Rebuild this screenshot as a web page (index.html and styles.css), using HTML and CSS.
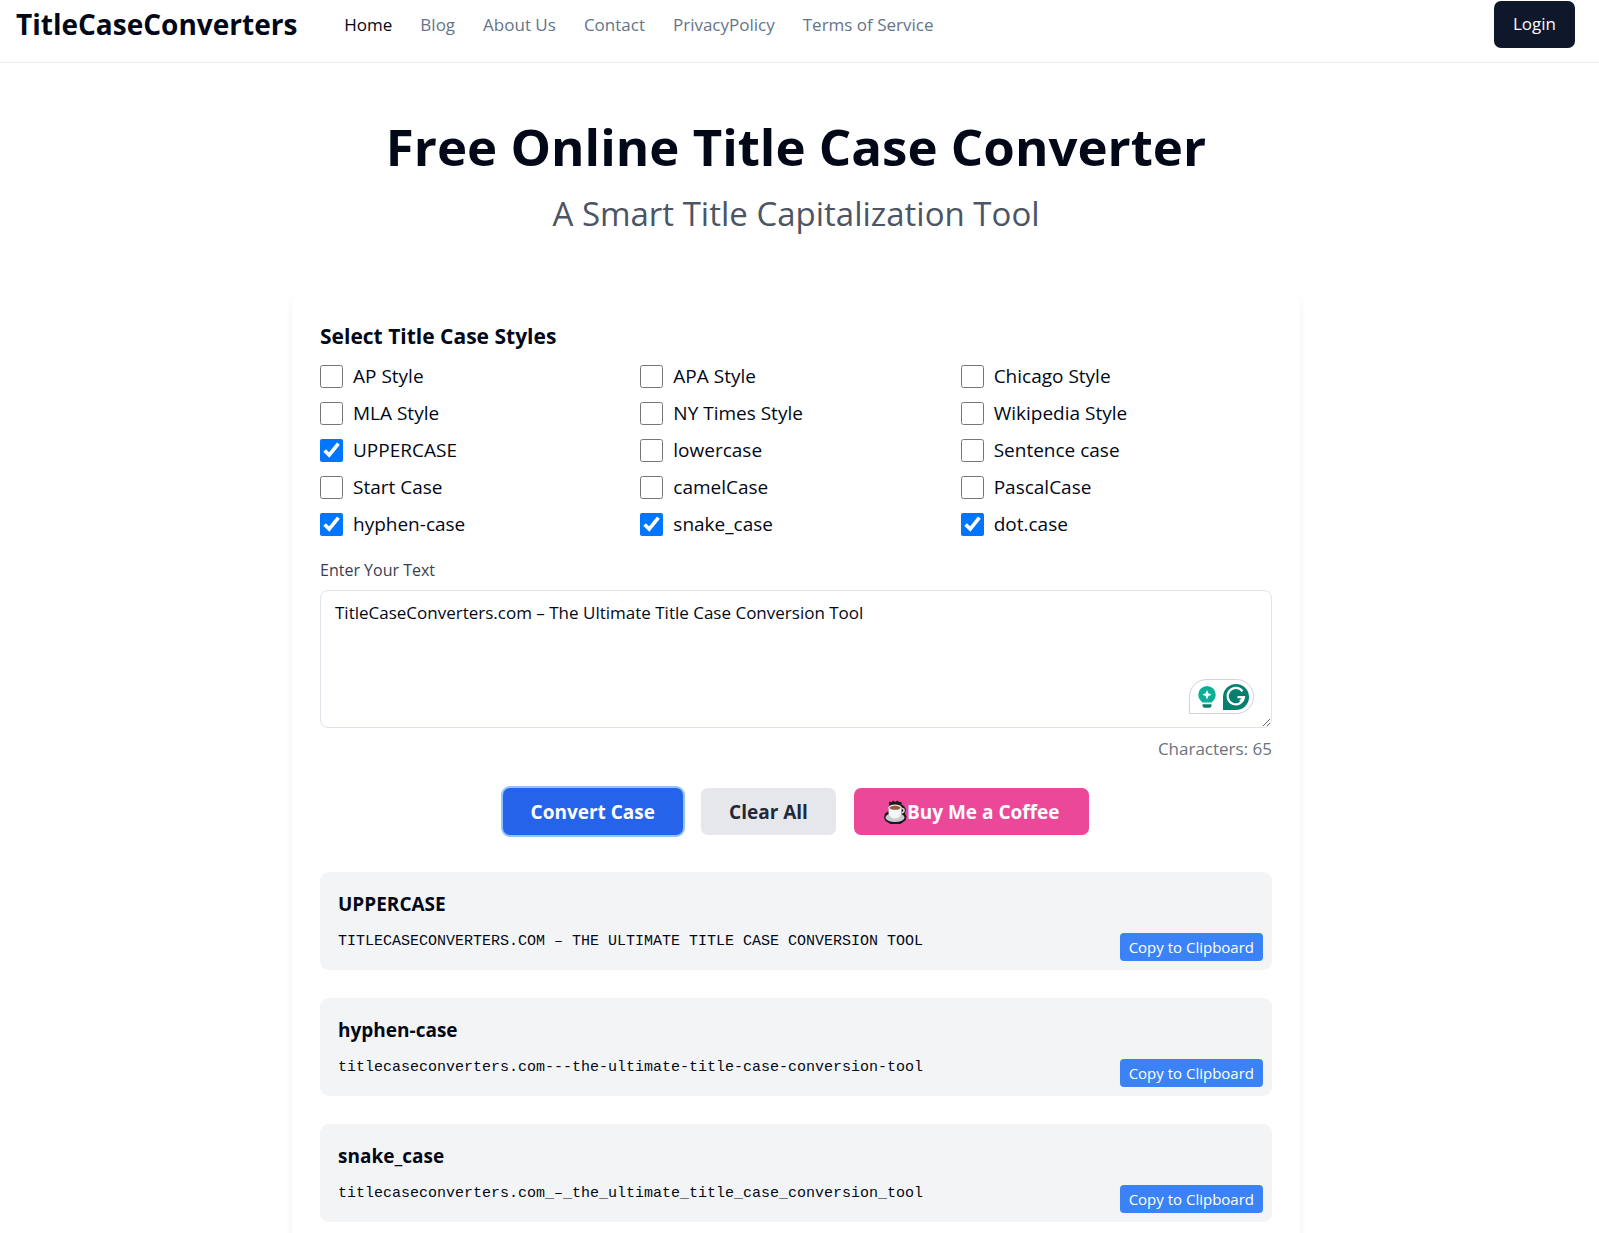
FILE: index.html
```html
<!DOCTYPE html>
<html lang="en">
<head>
<meta charset="utf-8">
<meta name="viewport" content="width=device-width, initial-scale=1">
<title>Free Online Title Case Converter</title>
<link rel="stylesheet" href="styles.css">
</head>
<body>
<header class="site-header">
  <a class="logo" href="#">TitleCaseConverters</a>
  <nav class="nav">
    <a class="nav-link nav-link-active" href="#">Home</a>
    <a class="nav-link" href="#">Blog</a>
    <a class="nav-link" href="#">About Us</a>
    <a class="nav-link" href="#">Contact</a>
    <a class="nav-link" href="#">PrivacyPolicy</a>
    <a class="nav-link" href="#">Terms of Service</a>
  </nav>
  <button class="login" type="button">Login</button>
</header>
<main class="page">
  <div class="hero">
    <h1 class="hero-title">Free Online Title Case Converter</h1>
    <p class="hero-subtitle">A Smart Title Capitalization Tool</p>
  </div>
  <form class="card">
    <fieldset class="styles">
      <legend class="styles-title">Select Title Case Styles</legend>
      <div class="styles-grid">
        <label class="option"><input class="check" type="checkbox">AP Style</label>
        <label class="option"><input class="check" type="checkbox">APA Style</label>
        <label class="option"><input class="check" type="checkbox">Chicago Style</label>
        <label class="option"><input class="check" type="checkbox">MLA Style</label>
        <label class="option"><input class="check" type="checkbox">NY Times Style</label>
        <label class="option"><input class="check" type="checkbox">Wikipedia Style</label>
        <label class="option"><input class="check" type="checkbox" checked>UPPERCASE</label>
        <label class="option"><input class="check" type="checkbox">lowercase</label>
        <label class="option"><input class="check" type="checkbox">Sentence case</label>
        <label class="option"><input class="check" type="checkbox">Start Case</label>
        <label class="option"><input class="check" type="checkbox">camelCase</label>
        <label class="option"><input class="check" type="checkbox">PascalCase</label>
        <label class="option"><input class="check" type="checkbox" checked>hyphen-case</label>
        <label class="option"><input class="check" type="checkbox" checked>snake_case</label>
        <label class="option"><input class="check" type="checkbox" checked>dot.case</label>
      </div>
    </fieldset>
    <label class="text-label" for="source">Enter Your Text</label>
    <div class="text-wrap">
      <textarea class="text-area" id="source">TitleCaseConverters.com – The Ultimate Title Case Conversion Tool</textarea>
      <div class="assistant">
        <svg width="18" height="22" viewBox="0 0 18 22" aria-hidden="true">
          <path fill="#0bae96" d="M9 0a8.700 8.700 0 0 0-8.700 8.700c0 3.300 1.800 5.500 4 7.800h9.400c2.200-2.300 4-4.500 4-7.800A8.700 8.700 0 0 0 9 0z"/>
          <path fill="#fff" d="M9 4l1.400 3.300 3.300 1.400-3.300 1.400L9 13.400l-1.400-3.300-3.300-1.400 3.300-1.400z"/>
          <path fill="#087d6e" d="M4.500 18.300h9v1.100a2.300 2.300 0 0 1-2.300 2.300H6.800a2.300 2.300 0 0 1-2.300-2.300z"/>
        </svg>
        <svg width="26" height="26" viewBox="0 0 26 26" aria-hidden="true">
          <path fill="#067f6f" d="M13 0a13 13 0 1 1 0 26H0V13A13 13 0 0 1 13 0z"/>
          <path fill="none" stroke="#fff" stroke-width="2.200" d="M19.500 7.300A8.200 8.200 0 1 0 21 13.200H14.500M17 17.500l4-4.300"/>
        </svg>
      </div>
    </div>
    <p class="count">Characters: 65</p>
    <div class="actions">
      <button class="btn btn-primary" type="button">Convert Case</button>
      <button class="btn btn-muted" type="button">Clear All</button>
      <button class="btn btn-pink" type="button">
        <svg width="23" height="24" viewBox="0 0 23 24" aria-hidden="true">
          <path fill="#1a1a1a" d="M5 4.500V1.500l2.500.8L9 .500l2 1.500 2.500-1.500 1.500 1.500h2.500v2.500l2.500 1.500 2 3.500-1 4 1.500 3-1 4-5 3.500H6.500l-5-3L0 17.500l1-4 3.500-2.500z"/>
          <ellipse cx="11" cy="17.500" rx="9.500" ry="4.500" fill="#c8cbd0"/>
          <path fill="none" stroke="#d5d8dd" stroke-width="1.500" d="M17.500 8.500c3.500-.5 3.500 3.500 0 4.500"/>
          <path fill="#f5f6f7" d="M4.500 7h13v5c0 4-3 6.500-6.500 6.500S4.500 16 4.500 12z"/>
          <ellipse cx="11" cy="7.300" rx="6.500" ry="2.800" fill="#e3e3e3"/>
          <ellipse cx="11" cy="7.800" rx="5.500" ry="2" fill="#9a5a3a"/>
        </svg>Buy Me a Coffee</button>
    </div>
    <div class="results">
      <section class="result">
        <div class="result-body">
          <h2 class="result-title">UPPERCASE</h2>
          <p class="result-text">TITLECASECONVERTERS.COM – THE ULTIMATE TITLE CASE CONVERSION TOOL</p>
        </div>
        <button class="copy" type="button">Copy to Clipboard</button>
      </section>
      <section class="result">
        <div class="result-body">
          <h2 class="result-title">hyphen-case</h2>
          <p class="result-text">titlecaseconverters.com---the-ultimate-title-case-conversion-tool</p>
        </div>
        <button class="copy" type="button">Copy to Clipboard</button>
      </section>
      <section class="result">
        <div class="result-body">
          <h2 class="result-title">snake_case</h2>
          <p class="result-text">titlecaseconverters.com_–_the_ultimate_title_case_conversion_tool</p>
        </div>
        <button class="copy" type="button">Copy to Clipboard</button>
      </section>
    </div>
  </form>
</main>
</body>
</html>
```
FILE: styles.css
```css
* {
  box-sizing: border-box;
}

html {
  scrollbar-width: none;
}

body {
  margin: 0;
  background: #fff;
  color: #020817;
  font-family: "Segoe UI", "Open Sans", "Noto Sans", sans-serif;
  font-size: 18px;
  line-height: 28px;
}

h1, h2, p {
  margin: 0;
}

button, textarea {
  font: inherit;
}

button {
  border: 0;
  cursor: pointer;
}

.site-header {
  display: flex;
  align-items: center;
  height: 63px;
  padding: 0 24px 14px 16px;
  border-bottom: 1px solid #e8eaf0;
}

.logo {
  margin-right: 47px;
  color: #020817;
  font-size: 28px;
  font-weight: 700;
  text-decoration: none;
}

.nav {
  display: flex;
  gap: 28px;
  padding-top: 2px;
}

.nav-link {
  color: #64748b;
  font-size: 17px;
  text-decoration: none;
}

.nav-link-active {
  color: #020817;
}

.login {
  height: 47px;
  margin-left: auto;
  padding: 0 19px;
  border-radius: 7px;
  background: #0f172a;
  color: #f8fafc;
  font-size: 17px;
}

.page {
  padding-right: 7px;
}

.hero {
  padding: 48px 16px 52px;
  text-align: center;
}

.hero-title {
  font-size: 51px;
  line-height: 70px;
}

.hero-subtitle {
  margin-top: 5px;
  color: #4b5563;
  font-size: 33px;
  line-height: 56px;
}

.card {
  max-width: 1008px;
  margin: 0 auto;
  padding: 28px;
  border-radius: 9px;
  background: #fff;
  box-shadow: 0 4px 7px rgba(0, 0, 0, 0.08);
}

.styles {
  min-width: 0;
  margin: 0 0 18px;
  padding: 0;
  border: 0;
}

.styles-title {
  padding: 0 0 12px;
  font-size: 21px;
  font-weight: 700;
}

.styles-grid {
  display: grid;
  grid-template-columns: repeat(3, 1fr);
  gap: 9px;
}

.option {
  display: flex;
  align-items: center;
  gap: 10px;
  font-size: 19px;
}

.check {
  width: 23px;
  height: 23px;
  margin: 0;
  accent-color: #0075ff;
}

.text-label {
  display: block;
  margin-bottom: 6px;
  color: #374151;
  font-size: 16px;
}

.text-wrap {
  position: relative;
  display: flex;
}

.text-area {
  width: 100%;
  height: 138px;
  padding: 8px 14px;
  border: 1px solid #dfe3ea;
  border-radius: 8px;
  background: #fff;
  color: #020817;
  font-size: 17px;
  resize: vertical;
}

.assistant {
  position: absolute;
  right: 18px;
  bottom: 14px;
  display: flex;
  align-items: center;
  justify-content: space-between;
  width: 65px;
  height: 35px;
  padding: 0 4px 0 8px;
  border: 1px solid #cfd4de;
  border-radius: 18px 18px 18px 0;
  background: #fff;
}

.count {
  margin: 7px 0 25px;
  color: #6b7280;
  font-size: 17px;
  text-align: right;
}

.actions {
  display: flex;
  flex-wrap: wrap;
  justify-content: center;
  gap: 18px;
  margin-bottom: 37px;
}

.btn {
  display: flex;
  align-items: center;
  height: 47px;
  padding: 0 28px;
  border-radius: 7px;
  font-size: 19px;
  font-weight: 700;
}

.btn-primary {
  background: #2563eb;
  box-shadow: 0 0 0 2px #93c5fd;
  color: #fff;
}

.btn-muted {
  background: #e5e7eb;
  color: #1f2937;
}

.btn-pink {
  padding: 0 30px;
  background: #ec4899;
  color: #fff;
}

.results {
  display: grid;
  gap: 28px;
}

.result {
  display: flex;
  align-items: flex-end;
  justify-content: space-between;
  gap: 18px;
  padding: 18px 9px 9px 18px;
  border-radius: 9px;
  background: #f3f4f6;
}

.result-body {
  min-width: 0;
  padding-bottom: 5px;
}

.result-title {
  margin-bottom: 10px;
  font-size: 19px;
  font-weight: 700;
}

.result-text {
  font-family: Consolas, "Liberation Mono", monospace;
  font-size: 15px;
  overflow-wrap: anywhere;
}

.copy {
  flex: none;
  height: 28px;
  padding: 0 9px;
  border-radius: 4px;
  background: #3b82f6;
  color: #fff;
  font-size: 15px;
}
```
